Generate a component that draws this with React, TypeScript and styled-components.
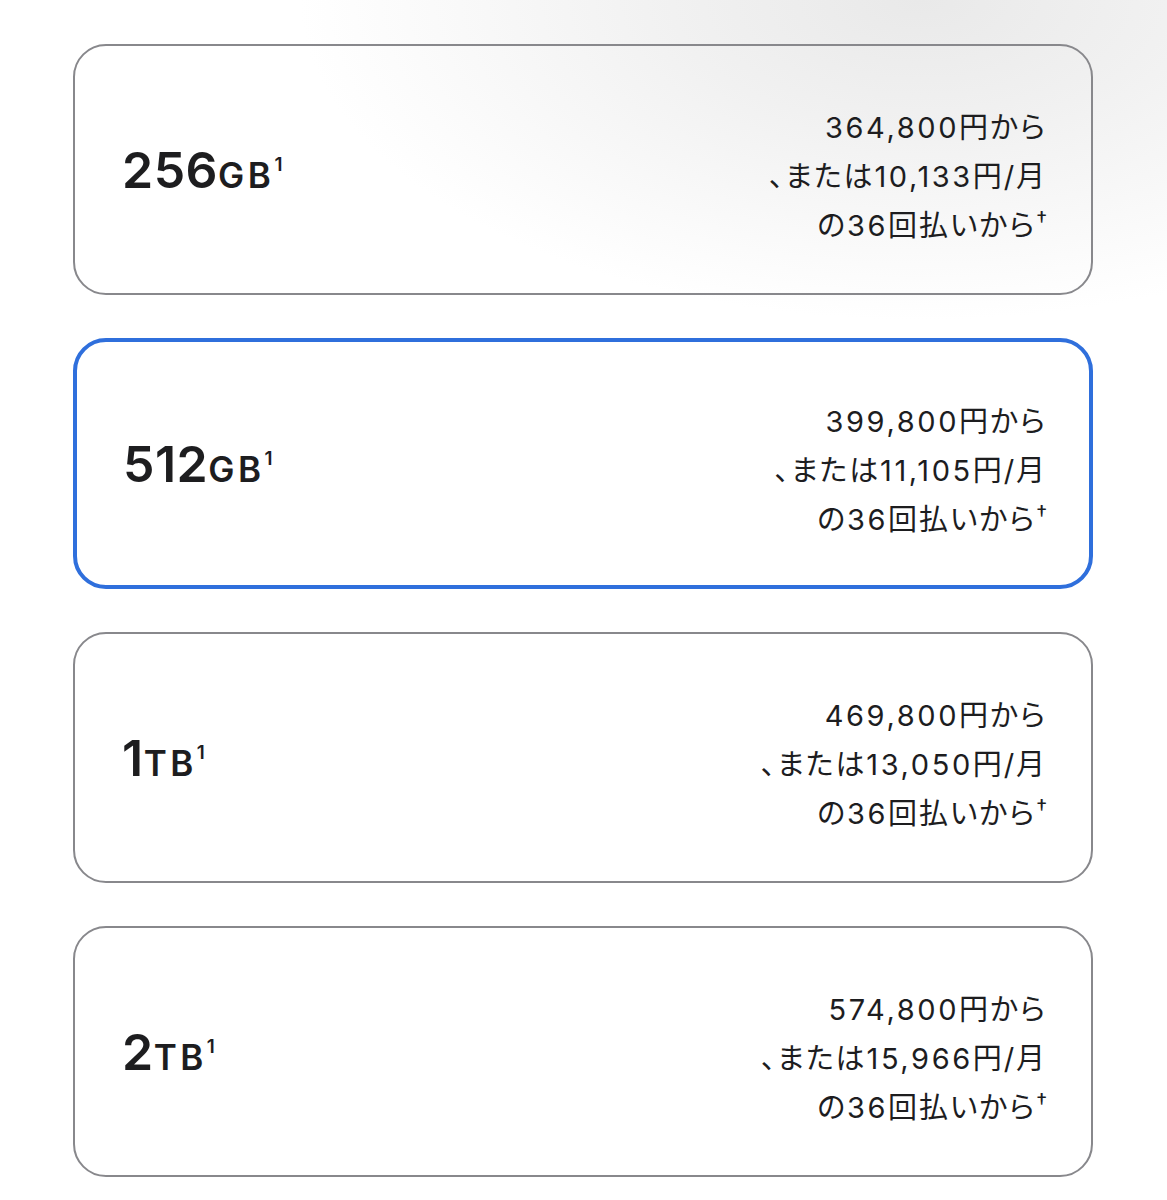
import React from 'react';
import styled, { createGlobalStyle } from 'styled-components';

const GlobalStyle = createGlobalStyle`
  html, body {
    margin: 0;
    padding: 0;
  }
  body {
    background:
      radial-gradient(ellipse 620px 320px at 920px 0px, #e9e9e9 0%, #f1f1f1 40%, rgba(255,255,255,0) 100%),
      #ffffff;
    color: #1d1d1f;
    font-family: Inter, "Noto Sans CJK JP", sans-serif;
    -webkit-font-smoothing: antialiased;
  }
`;

const Page = styled.main`
  width: 1167px;
  min-height: 1200px;
  box-sizing: border-box;
  padding: 44px 74px 0 73px;
  display: flex;
  flex-direction: column;
  gap: 43px;
`;

const Option = styled.button<{ $selected?: boolean }>`
  all: unset;
  box-sizing: border-box;
  height: 251px;
  display: flex;
  align-items: center;
  justify-content: space-between;
  padding: 0 ${({ $selected }) => ($selected ? '42px' : '44px')} 0
    ${({ $selected }) => ($selected ? '46px' : '47px')};
  border: ${({ $selected }) => ($selected ? '4px solid #2f6fdc' : '2px solid #88888c')};
  border-radius: 33px;
  background: transparent;
  cursor: pointer;
`;

const Capacity = styled.div`
  font-weight: 600;
  color: #1d1d1f;
  line-height: 1;
  white-space: nowrap;
`;

const Amount = styled.span`
  font-size: 50px;
  letter-spacing: 0.5px;
`;

const Unit = styled.span`
  font-size: 35px;
  letter-spacing: 3.5px;
`;

const Note = styled.span`
  position: relative;
  top: -17px;
  font-size: 19px;
  font-weight: 600;
`;

const Pricing = styled.div`
  display: flex;
  flex-direction: column;
  align-items: flex-end;
  padding-top: 16px;
  font-size: 29px;
  font-weight: 400;
  line-height: 49px;
  letter-spacing: 1.9px;
  color: #1d1d1f;
  text-align: right;
  font-feature-settings: 'palt';
`;

const Num = styled.span`
  letter-spacing: 2.6px;
`;

const Dagger = styled.span`
  position: relative;
  top: -9px;
  font-size: 22px;
  margin-left: 0;
  letter-spacing: 0;
`;

type Plan = {
  amount: string;
  unit: string;
  price: string;
  monthly: string;
  selected?: boolean;
};

const plans: Plan[] = [
  { amount: '256', unit: 'GB', price: '364,800', monthly: '10,133' },
  { amount: '512', unit: 'GB', price: '399,800', monthly: '11,105', selected: true },
  { amount: '1', unit: 'TB', price: '469,800', monthly: '13,050' },
  { amount: '2', unit: 'TB', price: '574,800', monthly: '15,966' },
];

export default function App() {
  return (
    <>
      <GlobalStyle />
      <Page>
        {plans.map((p) => (
          <Option key={p.amount + p.unit} $selected={p.selected}>
            <Capacity>
              <Amount>{p.amount}</Amount>
              <Unit>{p.unit}</Unit>
              <Note>1</Note>
            </Capacity>
            <Pricing>
              <span>
                <Num>{p.price}</Num>円から
              </span>
              <span>
                、または<Num>{p.monthly}</Num>円/月
              </span>
              <span>
                の<Num>36</Num>回払いから<Dagger>†</Dagger>
              </span>
            </Pricing>
          </Option>
        ))}
      </Page>
    </>
  );
}
